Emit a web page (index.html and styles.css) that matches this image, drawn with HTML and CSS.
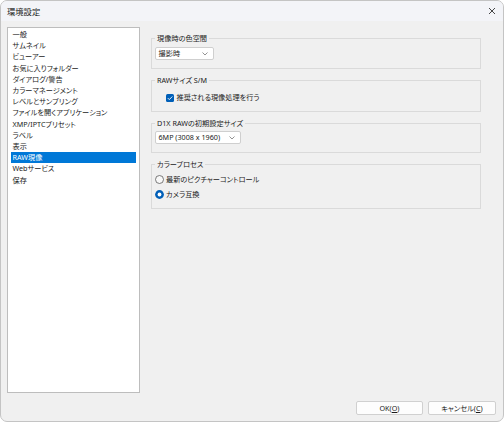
FILE: index.html
```html
<!DOCTYPE html>
<html lang="ja">
<head>
<meta charset="utf-8">
<title>環境設定</title>
<link rel="stylesheet" href="styles.css">
</head>
<body>
<div class="window">
  <div class="titlebar">
    <span class="title">環境設定</span>
    <svg class="close" width="8" height="8" viewBox="0 0 8 8"><path d="M1 1 L7 7 M7 1 L1 7" stroke="#333" stroke-width="0.9" fill="none"/></svg>
  </div>
  <div class="body">
    <div class="main">
      <ul class="list">
        <li>一般</li>
        <li>サムネイル</li>
        <li>ビューアー</li>
        <li>お気に入りフォルダー</li>
        <li>ダイアログ/警告</li>
        <li>カラーマネージメント</li>
        <li>レベルとサンプリング</li>
        <li>ファイルを開くアプリケーション</li>
        <li>XMP/IPTCプリセット</li>
        <li>ラベル</li>
        <li>表示</li>
        <li class="selected">RAW現像</li>
        <li>Webサービス</li>
        <li>保存</li>
      </ul>
      <div class="panel">
        <fieldset class="group g1">
          <legend>現像時の色空間</legend>
          <div class="select w1"><span>撮影時</span><svg class="chev" width="6" height="4" viewBox="0 0 6 4"><polyline points="0.5,0.5 3,3 5.5,0.5" fill="none" stroke="#777" stroke-width="0.8"/></svg></div>
        </fieldset>
        <fieldset class="group g2">
          <legend>RAWサイズ S/M</legend>
          <div class="check-row">
            <svg class="checkbox" width="8" height="8" viewBox="0 0 8 8"><rect x="0" y="0" width="8" height="8" rx="1.5" fill="#005fb8"/><path d="M1.8 4.1 L3.3 5.6 L6.3 2.5" fill="none" stroke="#fff" stroke-width="0.9"/></svg>
            <span>推奨される現像処理を行う</span>
          </div>
        </fieldset>
        <fieldset class="group g3">
          <legend>D1X RAWの初期設定サイズ</legend>
          <div class="select w2"><span>6MP (3008 x 1960)</span><svg class="chev" width="6" height="4" viewBox="0 0 6 4"><polyline points="0.5,0.5 3,3 5.5,0.5" fill="none" stroke="#777" stroke-width="0.8"/></svg></div>
        </fieldset>
        <fieldset class="group g4">
          <legend>カラープロセス</legend>
          <div class="radio-row">
            <svg class="radio" width="9" height="9" viewBox="0 0 9 9"><circle cx="4.5" cy="4.5" r="4" fill="#f8f8f8" stroke="#5c5c5c" stroke-width="0.8"/></svg>
            <span>最新のピクチャーコントロール</span>
          </div>
          <div class="radio-row">
            <svg class="radio" width="9" height="9" viewBox="0 0 9 9"><circle cx="4.5" cy="4.5" r="4.4" fill="#005fb8"/><circle cx="4.5" cy="4.5" r="1.9" fill="#fff"/></svg>
            <span>カメラ互換</span>
          </div>
        </fieldset>
      </div>
    </div>
    <div class="footer">
      <button class="btn">OK(<u>O</u>)</button>
      <button class="btn">キャンセル(<u>C</u>)</button>
    </div>
  </div>
</div>
</body>
</html>
```

FILE: styles.css
```css
html, body {
  margin: 0;
  padding: 0;
  background: #ffffff;
}

body {
  font-family: "Noto Sans", "Noto Sans CJK JP", sans-serif;
  font-size: 7.2px;
  color: #1a1a1a;
  font-feature-settings: "palt";
}

.window {
  box-sizing: border-box;
  width: 504px;
  height: 422px;
  border: 1px solid #c4c4c4;
  border-radius: 7px;
  overflow: hidden;
  background: #f0f0f0;
  display: flex;
  flex-direction: column;
}

.titlebar {
  height: 20px;
  flex: 0 0 20px;
  background: #f3f4f8;
  display: flex;
  align-items: center;
  justify-content: space-between;
  padding: 0 6px 0 6px;
}

.title {
  font-family: "Noto Sans CJK JP", sans-serif;
  font-size: 8.3px;
  color: #1b1b1b;
  line-height: 10px;
}

.close {
  display: block;
  margin-right: 1px;
}

.body {
  flex: 1;
  display: flex;
  flex-direction: column;
  padding: 6px 7px 6px 6px;
}

.main {
  display: flex;
  gap: 11px;
  height: 366px;
}

.list {
  box-sizing: border-box;
  width: 133px;
  height: 366px;
  margin: 0;
  padding: 1.1px 3px 0 3px;
  list-style: none;
  background: #ffffff;
  border: 1px solid #bdbdbd;
}

.list li {
  height: 11.2px;
  line-height: 11.2px;
  padding-left: 1.5px;
  white-space: nowrap;
}

.list li.selected {
  background: #0078d7;
  color: #ffffff;
}

.panel {
  width: 330px;
  padding-top: 6px;
  display: flex;
  flex-direction: column;
  gap: 6px;
}

.group {
  margin: 0;
  min-width: 0;
  border: 1px solid #dadada;
  padding: 0 3px 8px 3px;
}

.group legend {
  padding: 0 2px;
  line-height: 10px;
  height: 10px;
}

.g1 { padding-top: 4px; }
.g2 { padding-top: 7px; }
.g3 { padding-top: 3px; }
.g4 { padding-top: 5px; display: flex; flex-direction: column; gap: 4px; }

.select {
  box-sizing: border-box;
  height: 13px;
  background: #ffffff;
  border: 1px solid #cfcfcf;
  border-radius: 2px;
  display: flex;
  align-items: center;
  justify-content: space-between;
  padding: 0 5px 0 2.5px;
  line-height: 11px;
}

.w1 { width: 59px; }
.w2 { width: 86px; }

.chev { display: block; }

.check-row {
  display: flex;
  align-items: center;
  gap: 2.5px;
  height: 11px;
  line-height: 11px;
  padding-left: 11px;
}

.checkbox { display: block; }

.radio-row {
  display: flex;
  align-items: center;
  gap: 2px;
  height: 11px;
  line-height: 11px;
}

.radio { display: block; }

.footer {
  margin-top: 8px;
  display: flex;
  justify-content: flex-end;
  gap: 5px;
}

.btn {
  box-sizing: border-box;
  height: 14px;
  width: 68px;
  margin: 0;
  padding: 0;
  font-family: inherit;
  font-size: 7.2px;
  font-feature-settings: "palt";
  line-height: 12px;
  color: #1a1a1a;
  background: #fdfdfd;
  border: 1px solid #d0d0d0;
  border-radius: 2px;
}

.btn:first-child { width: 67px; }
```
